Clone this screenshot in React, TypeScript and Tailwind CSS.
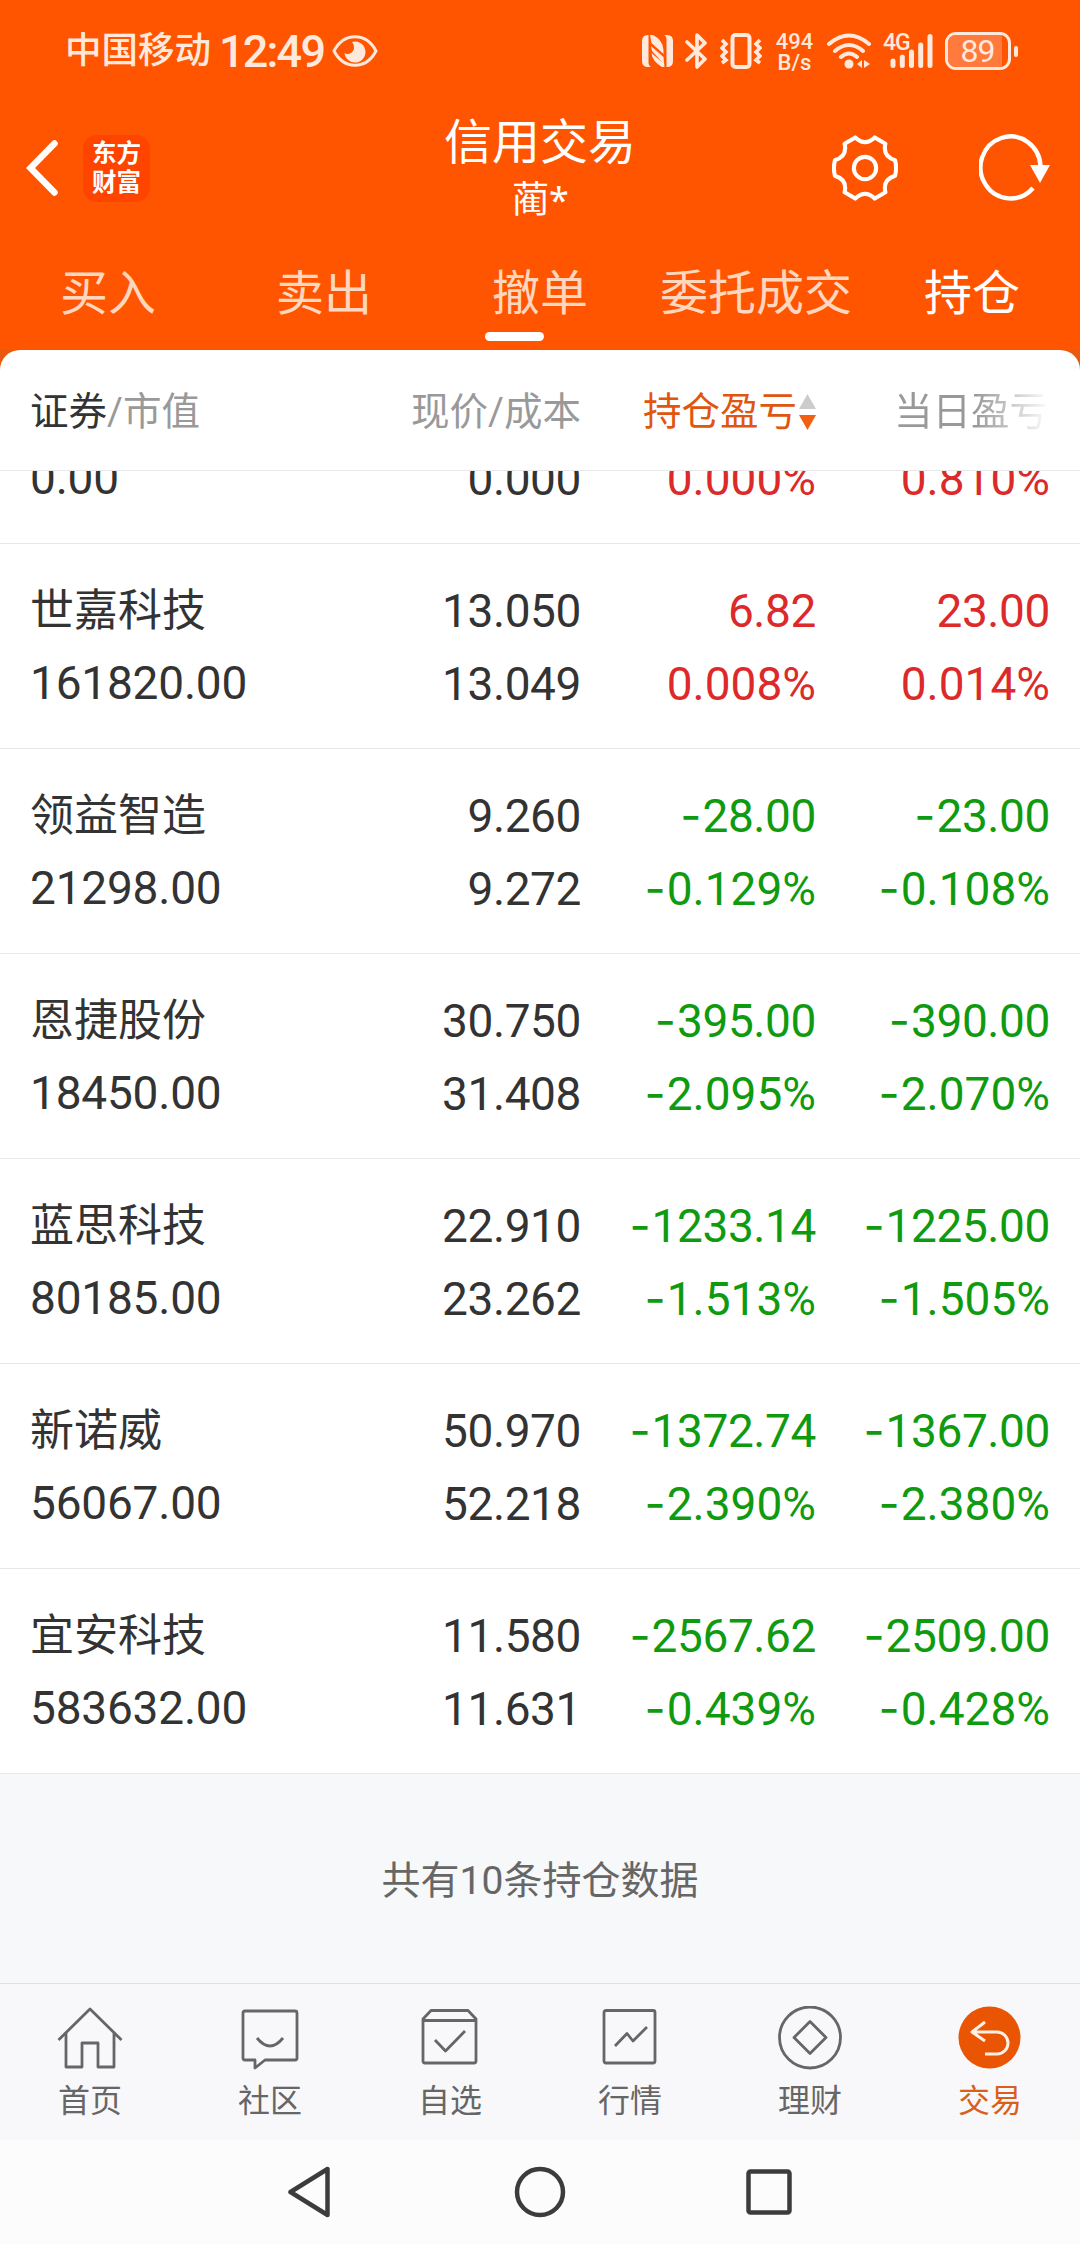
import type { ReactNode } from "react";

const CJK = "font-['Roboto','Noto_Sans_CJK_SC',sans-serif]";

type Cell = [string, string];

interface Position {
  name: string;
  value: string;
  price: Cell;
  profit: Cell;
  today: Cell;
}

// the first entry is scrolled half under the table head
const positions: Position[] = [
  { name: "", value: "0.00", price: ["", "0.000"], profit: ["", "0.000%"], today: ["", "0.810%"] },
  { name: "世嘉科技", value: "161820.00", price: ["13.050", "13.049"], profit: ["6.82", "0.008%"], today: ["23.00", "0.014%"] },
  { name: "领益智造", value: "21298.00", price: ["9.260", "9.272"], profit: ["-28.00", "-0.129%"], today: ["-23.00", "-0.108%"] },
  { name: "恩捷股份", value: "18450.00", price: ["30.750", "31.408"], profit: ["-395.00", "-2.095%"], today: ["-390.00", "-2.070%"] },
  { name: "蓝思科技", value: "80185.00", price: ["22.910", "23.262"], profit: ["-1233.14", "-1.513%"], today: ["-1225.00", "-1.505%"] },
  { name: "新诺威", value: "56067.00", price: ["50.970", "52.218"], profit: ["-1372.74", "-2.390%"], today: ["-1367.00", "-2.380%"] },
  { name: "宜安科技", value: "583632.00", price: ["11.580", "11.631"], profit: ["-2567.62", "-0.439%"], today: ["-2509.00", "-0.428%"] },
];

const tabs = [
  { label: "买入", active: false, marked: false },
  { label: "卖出", active: false, marked: false },
  { label: "撤单", active: false, marked: true },
  { label: "委托成交", active: false, marked: false },
  { label: "持仓", active: true, marked: false },
];

function StatusBar() {
  return (
    <div className="flex h-[102px] items-center justify-between pr-[62px] pl-[65px] text-[#ffe9dc]">
      <div className="flex items-center">
        <span className="text-[36.500px] leading-none font-medium">中国移动</span>
        <span className="ml-[8px] pt-[1px] text-[45px] leading-none font-medium tracking-[-1.8px]">12:49</span>
        <svg className="ml-[8px]" width="46" height="34" viewBox="0 0 46 34" fill="none">
          <path d="M2 17C12-2 34-2 44 17C34 36 12 36 2 17Z" stroke="currentColor" strokeWidth="3" />
          <path d="M20 8A10.500 10.500 0 1 1 12.500 19C16 22 22 18 22 14C22 11 21 9 20 8Z" fill="currentColor" />
        </svg>
      </div>
      <div className="flex items-center">
        <svg width="31" height="34" viewBox="0 0 31 34" fill="currentColor">
          <path d="M6 1H6.500V28Q6.500 32 9 33H6Q0 33 0 27V7Q0 1 6 1Z" />
          <path d="M25 33H24.500V6Q24.500 2 22 1H25Q31 1 31 7V27Q31 33 25 33Z" />
          <path d="M8 1H11Q21 6 21.500 16V20L9.500 9Z" />
          <path d="M9 12L21.500 23L22.500 33H20Q10 27 9.500 19L20 28L10 17Z" />
        </svg>
        <svg className="ml-[12px]" width="22" height="36" viewBox="0 0 22 36" fill="none" stroke="currentColor" strokeWidth="3.6" strokeLinejoin="round" strokeLinecap="round">
          <path d="M2 9L20 26L12 34V2L20 10L2 27" />
        </svg>
        <svg className="ml-[13px]" width="42" height="36" viewBox="0 0 42 36" fill="none" stroke="currentColor">
          <rect x="12.500" y="2" width="17" height="32" rx="3" strokeWidth="4" />
          <path d="M2 7L6 11L2 15L6 19L2 23L6 27L2 30M40 7L36 11L40 15L36 19L40 23L36 27L40 30" strokeWidth="3.600" />
        </svg>
        <div className="ml-[14px] flex w-[37px] flex-col items-center pt-[1px] text-[22px] leading-[21px] font-medium">
          <span>494</span>
          <span>B/s</span>
        </div>
        <svg className="ml-[14px]" width="44" height="36" viewBox="0 0 44 36" fill="none" stroke="currentColor" strokeWidth="4" strokeLinecap="round">
          <path d="M2 11Q22-6 42 11M8 18Q22 6 36 18M14 24Q22 17 30 24" />
          <circle cx="22" cy="31" r="4.500" fill="currentColor" stroke="none" />
          <path d="M35 27V35L30 31ZM37 27V35L43 31Z" fill="currentColor" stroke="none" />
        </svg>
        <div className="relative ml-[12px] h-[36px] w-[50px]">
          <span className="absolute top-0 left-0 text-[23px] leading-[20px] font-medium tracking-[-1px]">4G</span>
          <svg width="50" height="36" viewBox="0 0 50 36" stroke="currentColor" strokeWidth="5" strokeLinecap="round">
            <path d="M10 28V32.500M19.300 24V32.500M28.500 19V32.500M37.700 12V32.500M47 3.500V32.500" />
          </svg>
        </div>
        <div className="ml-[12px] flex items-center gap-[3px]">
          <div className="flex h-[38px] w-[66px] rounded-[11px] border-[3px] border-current">
            <div className="flex w-[54px] items-center justify-center rounded-l-[8px] bg-[#ff7a3c] pl-[5px] text-[32px] leading-none tracking-[-1px]">
              89
            </div>
          </div>
          <div className="h-[11px] w-[4px] rounded-[2px] bg-current" />
        </div>
      </div>
    </div>
  );
}

function TitleBar() {
  return (
    <div className="grid h-[144px] grid-cols-[1fr_auto_1fr] text-white">
      <div className="flex items-center gap-[25px] pb-[12px] pl-[26px]">
        <svg width="32" height="56" viewBox="0 0 32 56" fill="none" stroke="currentColor" strokeWidth="6.500" strokeLinecap="round">
          <path d="M28.500 3.500L4.500 28L28.500 52.500" />
        </svg>
        <div className="flex h-[67px] w-[67px] flex-col items-center justify-center rounded-[14px] bg-[#ff4400] pb-[1px] text-[24.500px] leading-[29px] font-bold">
          <span>东方</span>
          <span>财富</span>
        </div>
      </div>
      <div className="flex flex-col items-center pt-[12px]">
        <span className="text-[48px] leading-[58px]">信用交易</span>
        <span className="pl-[1px] text-[37px] leading-[58px]">
          蔺<span className="font-['Noto_Sans'] text-[36px] leading-none">*</span>
        </span>
      </div>
      <div className="flex items-center justify-end gap-[81px] pr-[30px] pb-[12px]">
        <svg width="66" height="66" viewBox="0 0 68 68" fill="none" stroke="currentColor" strokeWidth="4.200" strokeLinejoin="round">
          <path d="M24 2.500Q34 12 44 2.500L55 9Q52 22 65 26Q67 34 65 42Q52 46 55 59L44 65.500Q34 56 24 65.500L13 59Q16 46 3 42Q1 34 3 26Q16 22 13 9Z" />
          <circle cx="34" cy="34" r="11.500" />
        </svg>
        <svg width="71" height="68" viewBox="0 0 71 68" fill="none" stroke="currentColor" strokeWidth="4.400">
          <path d="M61.500 32A30 31 0 1 0 54 54" />
          <path d="M51 31H71L61 49Z" fill="currentColor" stroke="none" />
        </svg>
      </div>
    </div>
  );
}

function TabStrip() {
  return (
    <div className="grid h-[104px] grid-cols-5">
      {tabs.map((t) => (
        <div key={t.label} className="relative flex justify-center pt-[12px]">
          <span
            className={
              t.active
                ? "text-[48px] leading-[72px] whitespace-nowrap text-white"
                : "text-[48px] leading-[72px] whitespace-nowrap text-[#ffd6be]"
            }
          >
            {t.label}
          </span>
          {t.marked && <div className="absolute bottom-[9px] left-[53px] h-[9px] w-[59px] rounded-full bg-white" />}
        </div>
      ))}
    </div>
  );
}

const GRID = "grid grid-cols-[1fr_300px_235px_234px] pr-[30px] pl-[30px]";

function TableHead() {
  return (
    <div className={`${GRID} h-[121px] items-center rounded-t-[20px] border-b border-[#e8e8e8] bg-white pt-[4px] text-[38.500px] leading-none text-[#999]`}>
      <span>
        <span className="text-[#333]">证券</span>/市值
      </span>
      <span className="text-right">现价/成本</span>
      <span className="flex items-center justify-end gap-[2px] text-[#e0560f]">
        持仓盈亏
        <svg width="17" height="36" viewBox="0 0 17 36">
          <path d="M8.500 0L17 15H0Z" fill="#ccc" />
          <path d="M8.500 36L17 21H0Z" fill="#f45f12" />
        </svg>
      </span>
      <span className="bg-linear-to-r from-[#999] from-68% to-white bg-clip-text pr-[2px] text-right leading-[44px] text-transparent">当日盈亏</span>
    </div>
  );
}

function Amount({ text }: { text: string }) {
  return (
    <span className={text.endsWith("%") ? "" : "tracking-[-0.4px]"}>
      {text.startsWith("-") && <span className="mr-[1px] font-[Inter] leading-none tracking-normal">-</span>}
      {text.replace("-", "")}
    </span>
  );
}

function PairCell({ pair, tone }: { pair: Cell; tone: string }) {
  return (
    <div className={`flex flex-col items-end ${tone}`}>
      {pair.map((text, i) => (
        <div key={i} className="h-[73px]">
          <Amount text={text} />
        </div>
      ))}
    </div>
  );
}

function toneOf(pair: Cell) {
  return pair[1].startsWith("-") ? "text-[#0f9a0f]" : "text-[#dc2a2a]";
}

function PositionRow({ p }: { p: Position }) {
  return (
    <div className={`${GRID} h-[205px] shrink-0 border-b border-[#e8e8e8] pt-[31px] text-[46px] leading-[73px] text-[#333]`}>
      <div>
        <div className="h-[72px] text-[44px]">{p.name}</div>
        <div className="h-[73px] tracking-[-0.2px]">{p.value}</div>
      </div>
      <PairCell pair={p.price} tone="text-[#333]" />
      <PairCell pair={p.profit} tone={toneOf(p.profit)} />
      <PairCell pair={p.today} tone={toneOf(p.today)} />
    </div>
  );
}

function Icon({ children }: { children: ReactNode }) {
  return (
    <svg width="66" height="66" viewBox="0 0 66 66" fill="none" stroke="currentColor" strokeWidth="2.800" strokeLinejoin="round">
      {children}
    </svg>
  );
}

const navItems = [
  {
    label: "首页",
    icon: <path d="M1.500 34L33 3L64.500 34M9 27V61H25V37H41V61H57V27" />,
  },
  {
    label: "社区",
    icon: (
      <>
        <path d="M8 5H58Q60 5 60 7V52Q60 54 58 54H28L18 62V54H8Q6 54 6 52V7Q6 5 8 5Z" />
        <path d="M20 32Q33 48 46 32" />
      </>
    ),
  },
  {
    label: "自选",
    icon: (
      <>
        <path d="M6 13L14 4.500H51L59 13V55Q59 57 57 57H8Q6 57 6 55ZM6 14.500H59" />
        <path d="M18 34L28.500 45L48 25" />
      </>
    ),
  },
  {
    label: "行情",
    icon: (
      <>
        <rect x="7" y="4.500" width="51" height="52.500" rx="2" />
        <path d="M18 40L30 27.500L36 35L50 21" />
      </>
    ),
  },
  {
    label: "理财",
    icon: (
      <>
        <circle cx="33" cy="31.500" r="30.500" />
        <path d="M33 15.500L49 31.500L33 47.500L17 31.500Z" />
      </>
    ),
  },
  {
    label: "交易",
    active: true,
    icon: (
      <>
        <circle cx="32.500" cy="31.500" r="31" fill="#ea5504" stroke="none" />
        <path d="M28 16L15 26L28 35M15 26H40A11 11 0 0 1 40 48H28" stroke="#fff0e4" strokeWidth="3" />
      </>
    ),
  },
];

function BottomNav() {
  return (
    <nav className="grid h-[157px] grid-cols-6 border-t border-[#dedfe2] bg-[#f8f8fa]">
      {navItems.map((item) => (
        <div
          key={item.label}
          className={item.active ? "flex flex-col items-center pt-[22px] text-[#d9601a]" : "flex flex-col items-center pt-[22px] text-[#666]"}
        >
          <Icon>{item.icon}</Icon>
          <span className="mt-[5px] text-[32px] leading-[48px]">{item.label}</span>
        </div>
      ))}
    </nav>
  );
}

function SystemNav() {
  return (
    <div className="flex h-[104px] items-center justify-center bg-[#fcfcfc] text-[#3c3c3c]">
      <svg width="504" height="54" viewBox="0 0 504 54" fill="none" stroke="currentColor" strokeWidth="4.500" strokeLinejoin="round">
        <path d="M39.500 4V50L2.500 27Z" />
        <circle cx="252" cy="27" r="23" />
        <rect x="460.500" y="6.500" width="41" height="41" rx="2" />
      </svg>
    </div>
  );
}

export default function App() {
  return (
    <div className={`flex h-[2244px] w-[1080px] flex-col overflow-hidden bg-[#f7f8fa] ${CJK}`}>
      <header className="shrink-0 bg-[#ff5500]">
        <StatusBar />
        <TitleBar />
        <TabStrip />
      </header>
      <div className="shrink-0 bg-[#e95a0c]">
        <TableHead />
      </div>
      <main className="flex h-[1303px] shrink-0 flex-col justify-end overflow-hidden bg-white">
        {positions.map((p) => (
          <PositionRow key={p.value} p={p} />
        ))}
      </main>
      <div className="flex grow items-center justify-center pt-[5px] text-[39px] text-[#666]">共有10条持仓数据</div>
      <BottomNav />
      <SystemNav />
    </div>
  );
}
